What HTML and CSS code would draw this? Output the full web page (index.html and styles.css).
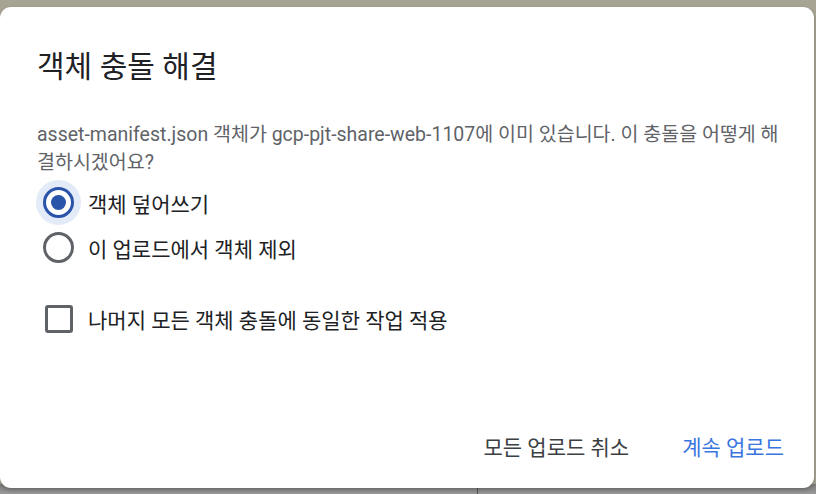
FILE: index.html
```html
<!DOCTYPE html>
<html lang="ko">
<head>
<meta charset="utf-8">
<link rel="stylesheet" href="styles.css">
</head>
<body>
<div class="backdrop">
  <div class="dialog">
    <h1 class="title">객체 충돌 해결</h1>
    <p class="desc">asset-manifest.json 객체가 gcp-pjt-share-web-1107에 이미 있습니다. 이 충돌을 어떻게 해결하시겠어요?</p>
    <div class="options">
      <label class="radio-row">
        <span class="radio checked"><span class="dot"></span></span>
        <span class="label">객체 덮어쓰기</span>
      </label>
      <label class="radio-row">
        <span class="radio"></span>
        <span class="label">이 업로드에서 객체 제외</span>
      </label>
    </div>
    <label class="check-row">
      <span class="checkbox"></span>
      <span class="label">나머지 모든 객체 충돌에 동일한 작업 적용</span>
    </label>
    <div class="actions">
      <button class="btn">모든 업로드 취소</button>
      <button class="btn primary">계속 업로드</button>
    </div>
  </div>
  <div class="under"><span class="divider"></span></div>
</div>
</body>
</html>
```
FILE: styles.css
```css
html, body {
  margin: 0;
  padding: 0;
  width: 816px;
  height: 494px;
  overflow: hidden;
}
body {
  background: #a8a493;
  font-family: Roboto, "Noto Sans CJK KR", sans-serif;
}
.backdrop {
  display: flex;
  flex-direction: column;
  height: 494px;
  padding-top: 7px;
  box-sizing: border-box;
}
.dialog {
  position: relative;
  z-index: 1;
  width: 814px;
  height: 481px;
  background: #fff;
  border-radius: 11px;
  box-sizing: border-box;
  padding: 40px 30px 0 37px;
  display: flex;
  flex-direction: column;
  box-shadow: 0 2px 4px rgba(0,0,0,0.25);
}
.under {
  flex: 1;
  background: linear-gradient(#7d7d7d, #9a9a9a);
  margin-top: -4px;
  position: relative;
}
.divider {
  position: absolute;
  left: 477px;
  top: 0;
  bottom: 0;
  width: 1px;
  background: #555;
}
.title {
  margin: 0;
  font-size: 30px;
  font-weight: 400;
  line-height: 40px;
  color: #202124;
}
.desc {
  margin: 34px 0 0;
  font-size: 19.5px;
  line-height: 28px;
  color: #5f6368;
}
.options {
  display: flex;
  flex-direction: column;
  margin-top: 3px;
}
.radio-row, .check-row {
  display: flex;
  align-items: center;
  height: 45px;
  color: #202124;
}
.label {
  font-size: 21px;
}
.radio {
  width: 25px;
  height: 25px;
  border: 3px solid #5f6368;
  border-radius: 50%;
  margin: 0 14px 0 6px;
  display: flex;
  align-items: center;
  justify-content: center;
  flex: none;
}
.radio.checked {
  border-color: #2a53aa;
  box-shadow: 0 0 0 7px #e4ebf8;
  background: #fff;
}
.dot {
  width: 15px;
  height: 15px;
  border-radius: 50%;
  background: #2a53aa;
}
.check-row {
  margin-top: 26px;
}
.checkbox {
  width: 22px;
  height: 22px;
  border: 3px solid #5f6368;
  border-radius: 3px;
  margin: 0 15px 0 8px;
  flex: none;
}
.actions {
  margin-top: auto;
  display: flex;
  justify-content: flex-end;
  gap: 53px;
  padding-bottom: 26px;
}
.btn {
  border: 0;
  background: none;
  padding: 0;
  font-family: Roboto, "Noto Sans CJK KR", sans-serif;
  font-size: 21px;
  color: #3c4043;
  line-height: 28px;
}
.btn.primary {
  color: #3a76e0;
}
```
